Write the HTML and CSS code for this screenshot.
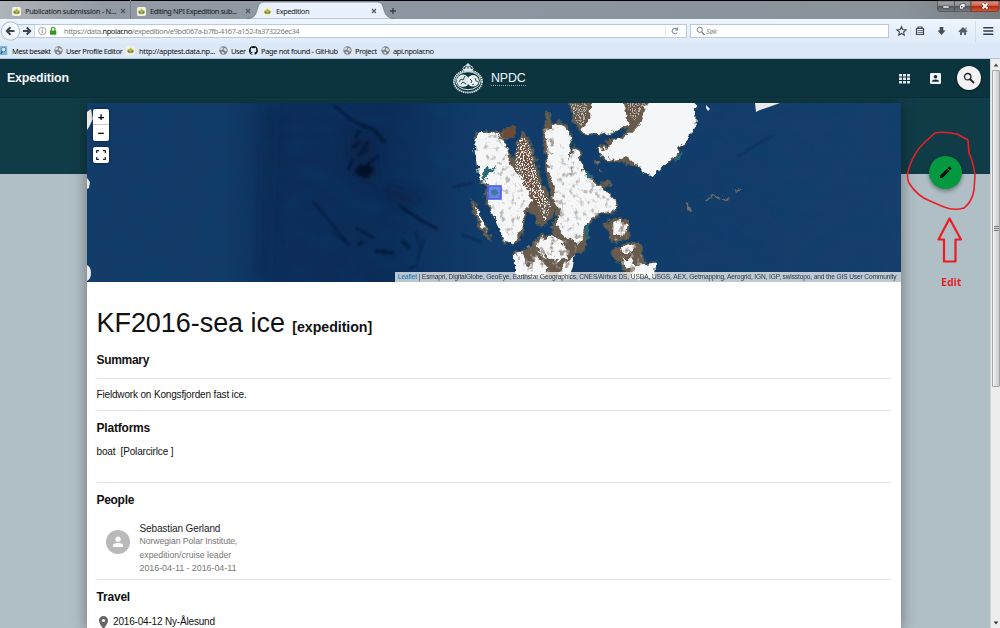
FILE: index.html
```html
<!DOCTYPE html>
<html lang="en">
<head>
<meta charset="utf-8">
<title>Expedition</title>
<link rel="stylesheet" href="styles.css">
</head>
<body>
<svg class="defs" width="0" height="0">
  <symbol id="bear" viewBox="0 0 10 10"><rect width="10" height="10" rx="2" fill="#f1f0e5"/><path d="M1 6 2 3.500 4 3 5 1.500 6 3 8 3.500 9 6 7 8H3Z" fill="#d8bd35"/><path d="M2 6h2M6 6h2" stroke="#297f9b" stroke-width="2"/><path d="M4.500 3.500h1.500M4 7h2" stroke="#719b42" stroke-width="1"/></symbol>
  <symbol id="globe" viewBox="0 0 10 10"><circle cx="5" cy="5" r="4.600" fill="#7a8085"/><path d="M1 3 3 1.500 5 2 4 4 2 5ZM6 2 8 3 9 5 7 6 5 4ZM3 6 6 7 5 9 3 8Z" fill="#d8dde1"/></symbol>
  <symbol id="x" viewBox="0 0 6 6"><path d="m1 1 4 4m0-4L1 5" stroke="#4d545b" stroke-width="1.100"/></symbol>
</svg>

<div class="window">
  <div class="tabstrip">
    <svg class="tabshape" width="150" height="19" viewBox="0 0 150 19"><path d="M2 19C11 18 11 13 13 7Q14 2 19 2H132Q137 2 138 7C140 14 141 18 150 19Z" fill="#e9f2fc" stroke="#68727b" stroke-width=".7"/></svg>
    <div class="tab tab-a"><svg class="fav"><use href="#bear"/></svg><span class="tx t1">Publication submission - N...</span><svg class="close"><use href="#x"/></svg></div>
    <div class="tab tab-b"><svg class="fav"><use href="#bear"/></svg><span class="tx t2">Editing NPI Expedition sub...</span><svg class="close"><use href="#x"/></svg></div>
    <div class="tab tab-c"><svg class="fav"><use href="#bear"/></svg><span class="tx t3">Expedition</span><svg class="close"><use href="#x"/></svg></div>
    <svg class="plus" width="8" height="8" viewBox="0 0 8 8"><path d="M4 1v6M1 4h6" stroke="#353d45" stroke-width="1.300"/></svg>
    <svg class="winbtns" width="63" height="12" viewBox="0 0 63 12">
      <defs><linearGradient id="gb" x2="0" y2="1"><stop stop-color="#a3a8ac"/><stop offset=".48" stop-color="#858b90"/><stop offset=".5" stop-color="#51565b"/><stop offset="1" stop-color="#777d82"/></linearGradient><linearGradient id="rb" x2="0" y2="1"><stop stop-color="#db9f91"/><stop offset=".48" stop-color="#cb5d47"/><stop offset=".5" stop-color="#b8260f"/><stop offset="1" stop-color="#d15a38"/></linearGradient></defs>
      <path d="M.5 1H34V11.500H3Q.5 11.500.5 9Z" fill="url(#gb)" stroke="#454a50" stroke-width=".7"/><path d="M34 1H62V9Q62 11.500 59 11.500H34Z" fill="url(#rb)" stroke="#5c3430" stroke-width=".7"/><path d="M17.500 1v10" stroke="#51565a"/><path d="M6 6h6v2H6Z" fill="#fff" stroke="#333" stroke-width=".5"/><path d="M24 3.500h4v4h-1.500V9h-4V5H24Z" fill="#fff" stroke="#333" stroke-width=".6"/><rect x="24" y="6" width="1.500" height="1.500" fill="#444"/><path d="m45.500 3.500 5 5m0-5-5 5" stroke="#5a3833" stroke-width="3"/><path d="m45.500 3.500 5 5m0-5-5 5" stroke="#fff" stroke-width="1.800"/>
    </svg>
  </div>

  <div class="toolbar">
    <svg class="nav" width="35" height="24" viewBox="0 19 35 24"><path d="M17 24.500H35V37.500H17" fill="#e9f1fa" stroke="#b1c4d9"/><circle cx="10.500" cy="31" r="9.200" fill="#f5f9fd" stroke="#a9bfd5"/><path d="M14.500 31H7M10.500 27.200 6.800 31l3.700 3.800M23 31h7M26.700 27.500 30.200 31l-3.500 3.500" fill="none" stroke="#3c4650" stroke-width="2"/></svg>
    <div class="url">
      <svg width="25" height="14" viewBox="35 24 25 14"><circle cx="42.300" cy="31" r="3.700" fill="none" stroke="#929699" stroke-width=".8"/><path d="M42.300 30.200v3M42.300 28.400v1" stroke="#85898d"/><path d="M51.200 31v-1.500q0-1.800 1.900-1.800T55 29.500V31" fill="none" stroke="#41992b" stroke-width="1.200"/><rect x="50" y="30.500" width="6.300" height="4.200" rx=".5" fill="#349a1b"/></svg>
      <span class="urltext">https://data.<b>npolar.no</b>/expedition/e9bd067a-b7fb-4167-a152-fa373226ec34</span>
      <svg class="reload" width="22" height="14" viewBox="666 24 22 14"><path d="M667.500 26v10" stroke="#dfe4e9"/><path d="M679 29.100A2.800 2.800 0 1 0 679.200 32.800M679.700 27.500v2.500h-2.500" fill="none" stroke="#667583" stroke-width="1"/></svg>
    </div>
    <div class="search"><svg width="11" height="12" viewBox="0 0 11 12"><circle cx="4.800" cy="4.800" r="2.600" fill="none" stroke="#7e8489"/><path d="m6.800 7 2.700 3" stroke="#7e8489" stroke-width="1.400"/></svg><i>Søk</i></div>
    <svg class="tools" width="112" height="24" viewBox="888 19 112 24">
      <path d="m901.500 26.700 1.300 2.900 3.200.3-2.400 2.100.7 3.200-2.800-1.700-2.800 1.700.7-3.200-2.400-2.100 3.200-.3Z" fill="none" stroke="#3e464e" stroke-width="1.100"/>
      <path d="M910.500 27v9M975.500 21v21" stroke="#cbd7e3" stroke-width=".8"/>
      <path d="M918 28v-1h4v1M916.500 28.500h7v6h-7Z" fill="none" stroke="#414950" stroke-width="1.200"/><path d="M917.500 30.600h5.500M917.500 32.600h5.500" stroke="#414950" stroke-width=".8"/>
      <path d="M939.700 27h3.600v3.500h2.200l-4 4.500-4-4.500h2.200Z" fill="#434b53"/>
      <path d="M958.300 31.500 963 27l4.700 4.500-.8.600-.8-.6V35h-2v-2.500h-2V35h-2v-3.500l-.9.700Z" fill="#555d65"/><path d="M966 27.500v2" stroke="#555d65"/>
      <path d="M983.300 27.700h10M983.300 31h10M983.300 34.200h10" stroke="#343c45" stroke-width="1.500"/>
    </svg>
  </div>

  <div class="bookmarks">
    <div class="bm b1"><svg class="fav" viewBox="0 0 10 10"><rect width="8" height="10" fill="#82b6d7"/><circle cx="4" cy="4" r="2.500" fill="#e1f1fb" stroke="#3c789d"/><path d="M2.500 6 1 9" stroke="#2c658b" stroke-width="1.500"/></svg><span class="tx">Mest besøkt</span></div>
    <div class="bm b2"><svg class="fav"><use href="#globe"/></svg><span class="tx">User Profile Editor</span></div>
    <div class="bm b3"><svg class="fav"><use href="#bear"/></svg><span class="tx">http://apptest.data.np...</span></div>
    <div class="bm b4"><svg class="fav"><use href="#globe"/></svg><span class="tx">User</span></div>
    <div class="bm b5"><svg class="fav" viewBox="0 0 16 16"><path d="M8 0a8 8 0 0 0-2.500 15.600c.4.100.5-.2.500-.4v-1.500c-2.200.5-2.700-1-2.700-1-.4-.9-.9-1.200-.9-1.200-.7-.5.100-.5.100-.5.800.1 1.200.8 1.200.8.700 1.200 1.900.9 2.300.7.100-.5.300-.9.500-1.100-1.800-.2-3.600-.9-3.600-4 0-.9.300-1.600.8-2.100-.1-.2-.4-1 .1-2.100 0 0 .7-.2 2.200.8a8 8 0 0 1 4 0c1.500-1 2.200-.8 2.200-.8.500 1.100.2 1.900.1 2.100.5.500.8 1.200.8 2.100 0 3.100-1.800 3.700-3.600 4 .3.200.5.700.5 1.400v2.300c0 .2.100.5.500.4A8 8 0 0 0 8 0Z" fill="#111"/></svg><span class="tx">Page not found - GitHub</span></div>
    <div class="bm b6"><svg class="fav"><use href="#globe"/></svg><span class="tx">Project</span></div>
    <div class="bm b7"><svg class="fav"><use href="#globe"/></svg><span class="tx">api.npolar.no</span></div>
  </div>

  <div class="viewport">
    <div class="page">
      <header class="appbar">
        <span class="apptitle">Expedition</span>
        <div class="brand">
          <svg width="32" height="32" viewBox="0 0 32 32"><ellipse cx="16" cy="19.500" rx="14" ry="11" fill="none" stroke="#dce6e8" stroke-width="1.800" stroke-dasharray="1.500 .6"/><ellipse cx="16" cy="18.700" rx="12.300" ry="9" fill="#0d3540" stroke="#e3edef" stroke-width="1"/><circle cx="11" cy="18.800" r="6.200" fill="#dbe6e8"/><circle cx="21" cy="18.800" r="5.800" fill="#eff5f6"/><path d="m7 20 2-3 2 1 2-4M9 22l2-2 3 2M18 17l2 2-1 2M23 16l1 3 2 1M20 23l2-1" fill="none" stroke="#204650" stroke-width="1"/><path d="m10 6 2 3.500h8l2-3.500-3 1-1-3-2 3-2-3-1 3Z" fill="#dfe8e9"/><path d="M16 1v5M14.500 2.500h3M11 5.500Q16 1 21 5.500" fill="none" stroke="#dfe8e9" stroke-width="1"/></svg>
          <span class="npdc">NPDC</span>
        </div>
        <div class="actions">
          <svg width="11" height="11" viewBox="0 0 11 11"><path d="M0 1h3v2.500H0ZM4 1h3v2.500H4ZM8 1h3v2.500H8ZM0 4.500h3V7H0ZM4 4.500h3V7H4ZM8 4.500h3V7H8ZM0 8h3v2.500H0ZM4 8h3v2.500H4ZM8 8h3v2.500H8Z" fill="#dfe6e8"/></svg>
          <svg width="11" height="11" viewBox="0 0 11 11"><rect width="11" height="11" rx="1.200" fill="#f1f4f5"/><circle cx="5.500" cy="3.800" r="1.800" fill="#0c333e"/><path d="M2 8.800q0-2.300 3.500-2.300t3.500 2.300Z" fill="#0c333e"/></svg>
          <div class="round"><svg width="12" height="12" viewBox="0 0 12 12"><circle cx="4.700" cy="4.700" r="3.200" fill="none" stroke="#222" stroke-width="1.300"/><path d="m7 7 4 4" stroke="#222" stroke-width="1.800"/></svg></div>
        </div>
      </header>

      <main class="card">
        <div class="map">
          <svg class="terrain" width="814" height="179" viewBox="87 103 814 179">
            <defs>
              <linearGradient id="sea"><stop stop-color="#143c69"/><stop offset=".17" stop-color="#133b68"/><stop offset=".24" stop-color="#0d2d58"/><stop offset=".37" stop-color="#0c2c58"/><stop offset=".48" stop-color="#123b69"/><stop offset="1" stop-color="#153e6b"/></linearGradient>
              <filter id="seabed" x="0" y="0" width="1" height="1"><feTurbulence type="fractalNoise" baseFrequency=".035 .06" numOctaves="5" seed="8"/><feColorMatrix values="0 0 0 0 0  0 0 0 0 .06  0 0 0 0 .17  1.600 0 0 0 -.64"/></filter>
              <filter id="rough" x="-10%" y="-10%" width="120%" height="120%"><feTurbulence type="fractalNoise" baseFrequency=".16" numOctaves="3" seed="4" result="n"/><feDisplacementMap in="SourceGraphic" in2="n" scale="8" xChannelSelector="R" yChannelSelector="G"/></filter>
              <filter id="ridges" x="-5%" y="-5%" width="110%" height="110%"><feTurbulence type="fractalNoise" baseFrequency=".2 .18" numOctaves="4" seed="17"/><feColorMatrix values="0 0 0 0 .36  0 0 0 0 .32  0 0 0 0 .28  5 0 0 0 -2.700"/><feComposite in2="SourceAlpha" operator="in"/></filter>
              <filter id="snow" x="-5%" y="-5%" width="110%" height="110%"><feTurbulence type="fractalNoise" baseFrequency=".3 .2" numOctaves="3" seed="9"/><feColorMatrix values="0 0 0 0 .85  0 0 0 0 .83  0 0 0 0 .82  9 0 0 0 -4.500"/><feComposite in2="SourceAlpha" operator="in"/></filter>
              <filter id="soft"><feGaussianBlur stdDeviation=".8"/></filter>
              <filter id="wide"><feGaussianBlur stdDeviation="6"/></filter>
            </defs>
            <rect x="87" y="103" width="814" height="179" fill="url(#sea)"/>
            <rect x="87" y="103" width="814" height="179" filter="url(#seabed)" opacity=".3"/>
            <g filter="url(#wide)" fill="#071c3e" opacity=".5"><path d="m345 130 30 5 5 50-28-8ZM388 184l40 15-20 9-25-14Z"/><path d="m262 103 18 0-8 179h-16Z" opacity=".4"/></g>
            <g fill="none" stroke="#031531" filter="url(#soft)" opacity=".8"><path d="M334 105 350 119 366 128" stroke-width="1.800"/><path d="M362 125 374 130 385 143" stroke-width="3.200"/><path d="m348 170 5-11m2 14 5-9m-8-16 8-6m-2 13 9-5m0 15 11-9m-18-26-5 8m13 4-5 7" stroke-width="2.200"/><path d="m359 166 10-1 5 5-7 8-10-3Z" fill="#020d24"/><path d="m313 201 18 22 19 23m-17-13 17 12m6-17 18 10" stroke-width="1.500"/><path d="m400 206 20 14 18 9" stroke-width="2.300"/><path d="M375 251l19 2m8-12 8 7m-53-3 6-3" stroke-width="3"/><path d="m416 232 4 16m4-9-7 22m-8 8 8-4M452 187l20-4M462 235l20 7" stroke-width="1"/><path d="M737 157l24-15 12-6" stroke-width="1" opacity=".6"/></g>
            <g filter="url(#rough)">
              <g transform="translate(460 100) scale(.3333)">
                <g fill="#675a4e" stroke="#26565f" stroke-width="2">
                  <path d="M45 145 43 100 68 108 75 85 90 103 105 90 125 105 135 80 168 78 160 115 130 125 145 145 160 180 170 130 190 95 205 110 225 160 235 220 255 260 275 300 285 340 262 372 240 382 225 370 230 345 200 340 190 380 195 400 165 435 135 430 110 375 90 330 75 295 65 275 80 265 75 245 60 245 55 210Z"/>
                  <path d="M258 75 255 45 268 35 275 70 295 60 330 85 335 125 330 165 345 130 365 160 370 210 400 235 430 260 460 290 472 310 470 335 430 345 400 360 385 375 380 430 365 465 345 460 335 490 330 535H170L160 460 185 455 215 435 240 405 280 400 270 380 290 350 270 310 275 290 262 240 255 170 245 90Z"/>
                  <path d="M325 0H705L708 75 690 110 655 150V170L610 200 580 228 550 222 530 195 490 188 450 185 425 175 405 145 410 132 440 145 440 120 480 115 505 90 480 90 420 105 370 108 355 90 340 60Z"/>
                  <path d="M30 290 45 310 60 355 85 390 95 430 85 425 60 385 40 340ZM430 370 468 350 505 360V420L450 430 445 390ZM450 455 480 435 530 425 545 440 555 490 590 485 585 535H495L480 490 460 475ZM422 245l25-3 8 16-25 5Z"/>
                </g>
                <g fill="#f5f6f8">
                  <path d="M46 145 47 115 68 92 80 100 92 106 110 98 130 125 145 150 155 195 180 230 205 280 220 305 190 330 185 380 162 433 135 425 112 375 90 325 84 265 88 250 60 240Z"/>
                  <path d="M256 95 285 70 325 90 332 130 325 180 345 145 362 180 367 210 395 240 435 270 463 295 469 330 420 342 385 358 370 395 355 430 330 420 300 395 287 370 302 335 280 300 285 260 268 220 260 140Z"/>
                  <path d="M395 0H490L507 80 430 100 375 105 360 85 390 60ZM565 0H704L707 75 690 109 652 148 650 168 610 198 580 226 550 220 530 190 500 175 455 180 440 150 460 125 505 105 540 70ZM408 140 440 150 452 180 425 170Z"/>
                  <path d="m40 315 18 20 15 48 12 15-20-18ZM460 365 480 360 500 380 490 410 460 402ZM525 495 588 488 585 535H510Z"/>
                  <path d="M240 415 275 405 320 440 320 475 280 485 245 465 228 440ZM165 465 185 460 205 500 230 470 265 500 250 530H165ZM320 485 345 465 330 535H290ZM490 475 515 475 525 500 500 510ZM480 445 530 432 520 450 490 460Z"/>
                </g>
                <g fill="#6b4c39"><path d="M135 83 166 80 158 113 135 116Z"/><path d="M180 145 193 105 213 158 218 225 244 280 235 325 217 285 194 230 179 180Z" opacity=".75"/><path d="M500 10H560L525 62 510 45Z" opacity=".5"/></g>
              </g>
            </g>
            <g transform="translate(460 100) scale(.3333)" filter="url(#snow)"><path d="M170 130 190 105 210 140 235 240 275 320 255 365 225 300 185 250 165 200Z"/><path d="M330 10H385L370 80 350 70ZM500 10H560L525 62 510 45Z" opacity=".65"/></g>
            <g filter="url(#ridges)"><g transform="translate(460 100) scale(.3333)"><path opacity=".65" d="M60 115 110 100 135 150 155 200 175 240 200 300 155 420 80 310 100 240ZM300 130 365 205 455 295 460 330 380 360 350 410 300 380 285 300Z"/><path d="M250 85 285 85 275 240ZM330 175 345 145 360 180 325 240ZM175 460 240 410H330L370 400 350 450 325 530H175ZM440 370 500 365 500 415 450 425ZM460 450 535 430 550 490 510 530Z"/></g></g>
            <g fill="#286777" filter="url(#rough)"><path d="m484 170 4-5 4 4 4-3-2 6-6 3-3 7-3-4Z"/><path d="M679 152 682 149 680 160 674 163ZM584 170 594 177 588 180ZM585 225l3-2 1 14-3 2Z"/></g>
            <path d="m685 203 3-1 5 9-4 2ZM705 201l5-5 3-1 3 2 4-1-2 3-5-2-4 2-2 4ZM718 197l6 2 5-3 1 2-6 3ZM736 189l4 1-3 2ZM594 162l5-2 2 3-4 3ZM598 170l3 0-1 3Z" fill="#746c65" filter="url(#rough)"/>
            <path d="M755 103h25l-11 4-9 3-4 2ZM706 105l4 4-2 2-2-3ZM87 112l4-3 2 10-4 8-2 3ZM87 265q4 2 4 8t-4 8ZM87 178l3 4-1 6-2 1Z" fill="#e9e9e7"/>
            <rect x="488" y="186" width="13" height="13" fill="#3c64dd" fill-opacity=".75" stroke="#4458ed" stroke-width="1.500"/>
            <path d="m491 190 5-1 3 4-4 3-4-2Z" fill="#397491" opacity=".8"/>
          </svg>
          <div class="controls">
            <div class="zoombox"><span>+</span><span>−</span></div>
            <div class="full"><svg width="10" height="10" viewBox="0 0 10 10"><path d="M.7 3V.7H3M7 .7h2.300V3M9.300 7v2.300H7M3 9.300H.7V7" fill="none" stroke="#222" stroke-width="1.200"/></svg></div>
          </div>
          <div class="credit"><span><em>Leaflet</em> | Esmapri, DigitalGlobe, GeoEye, Earthstar Geographics, CNES/Airbus DS, USDA, USGS, AEX, Getmapping, Aerogrid, IGN, IGP, swisstopo, and the GIS User Community</span></div>
        </div>

        <div class="content">
          <h1>KF2016-sea ice <small>[expedition]</small></h1>
          <h2 class="h-summary">Summary</h2>
          <p class="summary">Fieldwork on Kongsfjorden fast ice.</p>
          <h2 class="h-platforms">Platforms</h2>
          <p class="platforms">boat&nbsp; [Polarcirlce ]</p>
          <h2 class="h-people">People</h2>
          <div class="person">
            <svg width="24" height="24" viewBox="0 0 24 24"><circle cx="12" cy="12" r="12" fill="#b9b9b9"/><circle cx="12" cy="9.200" r="2.600" fill="#fff"/><path d="M7 17v-1.500Q7 13 12 13t5 2.500V17Z" fill="#fff"/></svg>
            <div class="who"><div class="name">Sebastian Gerland</div><div class="l1">Norwegian Polar Institute,</div><div class="l2">expedition/cruise leader</div><div class="l3">2016-04-11 - 2016-04-11</div></div>
          </div>
          <h2 class="h-travel">Travel</h2>
          <div class="travel"><svg width="9" height="13" viewBox="0 0 9 13"><path d="M4.500 0A4.500 4.500 0 0 0 0 4.500Q0 7.500 4.500 13 9 7.500 9 4.500A4.500 4.500 0 0 0 4.500 0Z" fill="#666"/><circle cx="4.500" cy="4.500" r="1.600" fill="#fff"/></svg><span>2016-04-12 Ny-Ålesund</span></div>
        </div>
      </main>
    </div>

    <div class="scrollbar"><div class="arrow"><svg width="6" height="4" viewBox="0 0 6 4"><path d="m.7 3.500 2.300-3 2.300 3Z" fill="#444"/></svg></div><div class="thumb"><i class="grip"></i></div><div class="arrow down"><svg width="6" height="4" viewBox="0 0 6 4"><path d="m.7.500 2.300 3 2.300-3Z" fill="#333"/></svg></div></div>
  </div>

  <div class="fab"><svg width="13" height="13" viewBox="0 0 13 13"><path d="M1 9.500 8 2.700 10.300 5 3.500 12H1ZM8.700 2 10 .8q.5-.4 1 0l1.200 1.300q.5.500 0 1L11 4.300Z" fill="#06120a"/></svg></div>
  <svg class="marks" width="80" height="150" viewBox="900 125 80 150"><path d="M968 140 957 134Q943 131 935 133L925 142Q914 152 909 168 906 176 909 183 917 196 930 201L944 207Q954 211 964 208 972 202 974 190L975 175Q973 161 969 153Z" fill="none" stroke="#ec1f27" stroke-width="1.600" stroke-linejoin="round"/><path d="M949.500 218.500 938.500 239.500H944V261.500H955.500V239.500H961Z" fill="none" stroke="#ed1c24" stroke-width="2.200" stroke-linejoin="round"/></svg>
  <div class="edit">Edit</div>
</div>
</body>
</html>
```

FILE: styles.css
```css
* { box-sizing: border-box; }
body { margin: 0; }
svg { display: block; flex: none; }
.defs { position: absolute; }
.window { position: relative; width: 1000px; height: 628px; overflow: hidden; display: flex; flex-direction: column; font-family: "Noto Sans", "Open Sans", sans-serif; }

.tabstrip { height: 19px; flex: none; position: relative; display: flex; background: linear-gradient(#000 0 1px, transparent 1px), linear-gradient(90deg, #aeb3b8, #939ca6 10%, #8b96a0 40%, #89939c 90%, #777b7c); }
.tabshape { position: absolute; left: 245px; top: 0; }
.tab { position: relative; display: flex; align-items: center; height: 19px; padding-top: 3px; color: #15191d; font-size: 7.500px; letter-spacing: -.28px; white-space: nowrap; }
.tab-a { width: 131px; padding-left: 12px; border-right: 1px solid #77818a; }
.tab-b { width: 122px; padding-left: 6px; }
.t2 { letter-spacing: -.44px; }
.tab-c { width: 136px; padding-left: 10px; }
.t3 { letter-spacing: -.42px; }
.fav { width: 9px; height: 9px; flex: none; }
.tab .fav { margin-right: 4px; }
.close { width: 6px; height: 6px; position: absolute; top: 8px; right: 10px; }
.tab-a .close { right: 4px; }
.tab-b .close { right: 2px; }
.tab-c .close { right: 12px; }
.plus { margin: 7px 0 0; }
.winbtns { margin-left: auto; }

.toolbar { height: 24px; flex: none; display: flex; align-items: flex-start; background: linear-gradient(#edf5fd, #e0ebf8); }
.url { margin-top: 5px; width: 652px; height: 14px; border: 1px solid #b7cade; border-left: 0; background: #fff; display: flex; align-items: center; }
.urltext { margin-left: 4px; font-size: 7.500px; color: #7b7f83; white-space: nowrap; letter-spacing: -.4px; }
.urltext b { color: #111; font-weight: 400; }
.reload { margin-left: auto; }
.search { margin: 5px 0 0 3px; width: 199px; height: 14px; border: 1px solid #b7cade; background: #fff; display: flex; align-items: center; padding-left: 4px; font-size: 7.500px; letter-spacing: -.4px; color: #8b8f93; gap: 0; }
.tools { margin-left: -1px; }

.bookmarks { height: 16px; flex: none; display: flex; background: #dbe8f7; border-bottom: 1px solid #b4c5d5; font-size: 7.500px; letter-spacing: -.4px; color: #111; }
.bm { display: flex; align-items: center; gap: 3px; white-space: nowrap; }
.b1 { width: 54px; }
.b2 { width: 72px; }
.b3 { width: 93px; gap: 4px; letter-spacing: -.32px; }
.b4 { width: 30px; }
.b5 { width: 94px; letter-spacing: -.38px; }
.b6 { width: 38px; }

.viewport { height: 569px; flex: none; display: flex; }
.page { width: 990px; background: linear-gradient(#103c47 0 115px, #b0bec5 115px); }
.appbar { height: 39px; background: #0c343f; display: flex; position: relative; align-items: center; padding: 0 9px 0 7px; border-bottom: 1px solid #0a2f38; font-family: "Liberation Sans", Arial, sans-serif; color: #f3f6f7; }
.apptitle { font-size: 12.400px; font-weight: 700; letter-spacing: -.15px; width: 445px; }
.brand { display: flex; align-items: center; gap: 7px; }
.npdc { font-size: 12.400px; line-height: 14px; letter-spacing: -.15px; border-bottom: 1px dotted #94a6ab; }
.actions { margin-left: auto; display: flex; align-items: center; }
.actions > svg { margin-right: 20px; }
.actions > svg + svg { margin-right: 16px; }
.round { width: 24px; height: 24px; border-radius: 50%; background: #f2f2f2; display: flex; align-items: center; justify-content: center; box-shadow: 0 1px 3px #0008; }
.card { margin: 5px 0 0 87px; width: 814px; height: 525px; background: #fff; box-shadow: 0 2px 14px #0006; font-family: "Liberation Sans", Arial, sans-serif; }
.map { position: relative; height: 179px; }
.controls { position: absolute; left: 6px; top: 6px; }
.zoombox { width: 16px; height: 32px; background: #fff; border-radius: 2px; box-shadow: 0 0 3px #0009; font: 700 11.500px/16px "Liberation Sans", Arial, sans-serif; text-align: center; display: flex; flex-direction: column; }
.zoombox span { height: 16px; }
.zoombox span:first-child { border-bottom: 1px solid #ccc; }
.full { margin-top: 6px; width: 16px; height: 16px; border-radius: 2px; background: #fff; display: flex; align-items: center; justify-content: center; box-shadow: 0 0 3px #0009; }
.credit { position: absolute; right: 0; bottom: 0; width: 506px; height: 10px; background: #ffffffb8; font-size: 6.600px; letter-spacing: -.131px; line-height: 10px; padding-left: 3px; white-space: nowrap; color: #333; }
.credit em { color: #0078a8; font-style: normal; }

.content { padding: 0 10px 0 9.500px; color: #111; }
h1, h2, p { margin: 0; }
h1 { height: 66px; padding-top: 25px; font-size: 27px; letter-spacing: -.05px; line-height: 32px; font-weight: 400; }
h1 small { font-size: 14.200px; font-weight: 700; margin-left: 0; }
h2 { font-size: 12px; letter-spacing: -.3px; line-height: 14px; font-weight: 700; }
.h-summary { height: 31px; padding-top: 5px; border-bottom: 1px solid #e2e2e2; }
p { font-size: 10px; letter-spacing: -.16px; line-height: 12px; }
.summary { height: 32px; padding-top: 10px; border-bottom: 1px solid #e2e2e2; }
.h-platforms { height: 32px; padding-top: 10px; letter-spacing: -.2px; }
.platforms { height: 40px; padding-top: 3px; border-bottom: 1px solid #e2e2e2; }
.h-people { height: 39px; padding-top: 10px; }
.person { height: 58px; display: flex; border-bottom: 1px solid #e2e2e2; padding-left: 9.500px; }
.person svg { margin-top: 8px; }
.who { margin-left: 9.500px; font-size: 8.700px; letter-spacing: -.06px; color: #777; line-height: 13px; }
.name { font-size: 10px; letter-spacing: -.12px; color: #222; line-height: 14px; height: 14px; }
.l1 { height: 12px; line-height: 11px; }
.l2 { height: 14px; line-height: 14px; letter-spacing: 0; }
.l3 { font-size: 9px; letter-spacing: -.08px; }
.h-travel { height: 36px; padding-top: 10px; letter-spacing: -.2px; }
.travel { display: flex; gap: 5px; padding-left: 2.500px; font-size: 10px; letter-spacing: -.18px; line-height: 12px; }

.scrollbar { width: 10px; background: #ededed; border-left: 1px solid #d4d4d4; display: flex; flex-direction: column; }
.arrow { height: 11px; display: flex; align-items: center; justify-content: center; }
.thumb { height: 317px; margin: 0 0 0 1px; border: 1px solid #a2a4a7; border-radius: 1px; background: linear-gradient(90deg, #f7f7f7, #dcdcde 50%, #c8c9cd); display: flex; align-items: center; justify-content: center; }
.grip { width: 5px; height: 6px; background: repeating-linear-gradient(#777 0 1px, #ddd 1px 2px); }
.down { margin-top: auto; }

.fab { position: absolute; left: 929px; top: 156px; width: 33px; height: 33px; border-radius: 50%; background: #049841; box-shadow: 0 2px 4px #0006; display: flex; align-items: center; justify-content: center; }
.marks { position: absolute; left: 900px; top: 125px; }
.edit { position: absolute; left: 941px; top: 275px; color: #ed1c24; font: 700 10.500px/14px "Open Sans", sans-serif; }
```
